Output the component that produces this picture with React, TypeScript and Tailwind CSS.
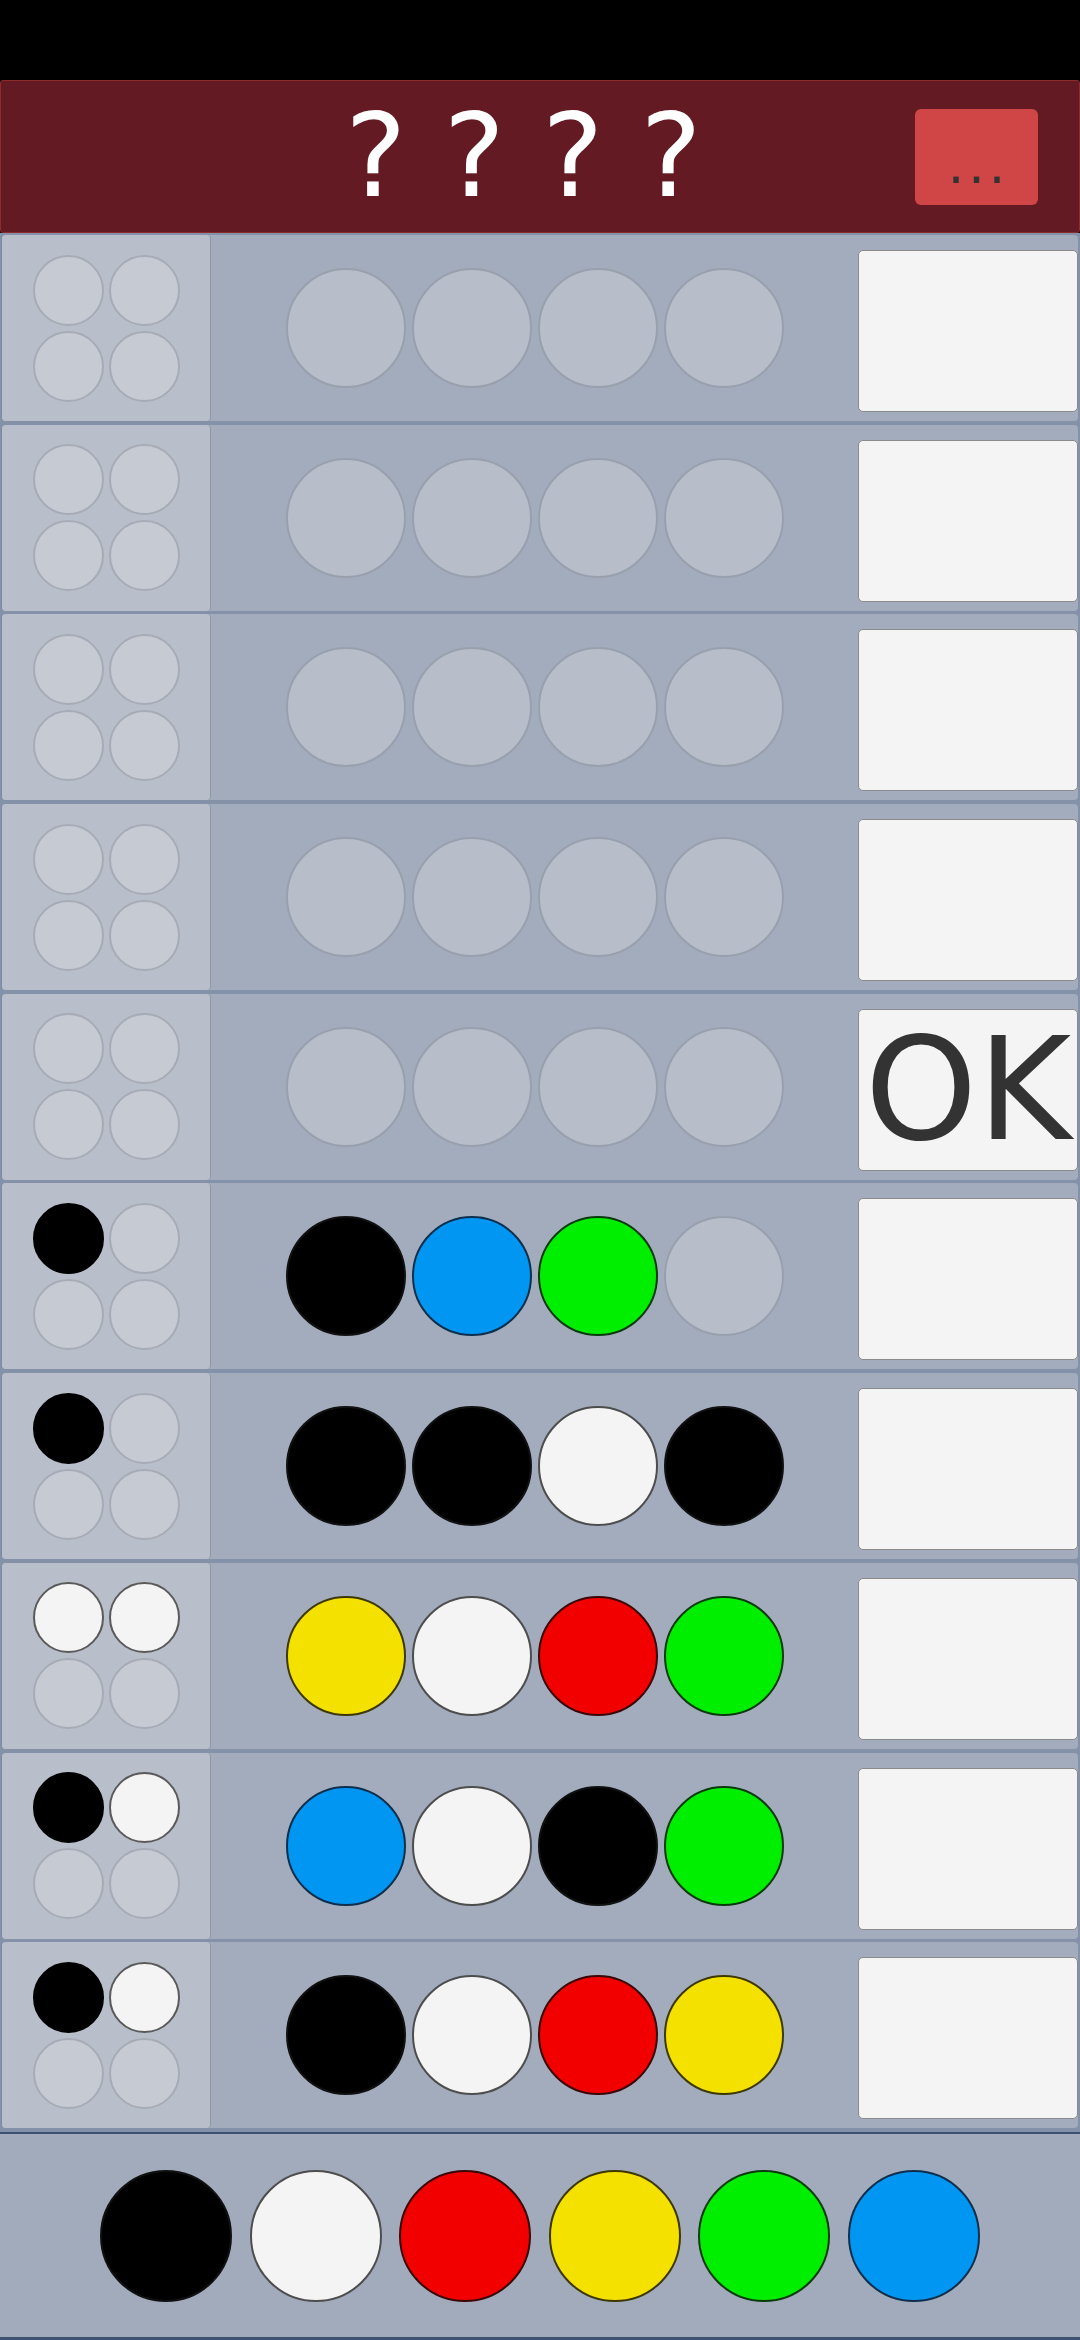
import React from 'react';

type Peg = 'empty' | 'black' | 'white' | 'red' | 'yellow' | 'green' | 'blue';
type Hint = 'empty' | 'black' | 'white';

interface Guess {
  pegs: Peg[];
  hints: Hint[];
  ok?: boolean;
}

const pegClass: Record<Peg, string> = {
  empty: 'bg-[#b7bdc9] border-[#99a0ad]',
  black: 'bg-black border-[#111]',
  white: 'bg-[#f4f4f4] border-[#4d4d4d]',
  red: 'bg-[#f20000] border-[#3a0606]',
  yellow: 'bg-[#f5e100] border-[#3d3800]',
  green: 'bg-[#00ee00] border-[#0a3a0a]',
  blue: 'bg-[#0096f2] border-[#0d2f4d]'
};

const hintClass: Record<Hint, string> = {
  empty: 'bg-[#c6cad3] border-[#a6abb6]',
  black: 'bg-black border-black',
  white: 'bg-[#f4f4f4] border-[#5a5a5a]'
};

const E: Peg = 'empty';

const guesses: Guess[] = [
  { pegs: [E, E, E, E], hints: ['empty', 'empty', 'empty', 'empty'] },
  { pegs: [E, E, E, E], hints: ['empty', 'empty', 'empty', 'empty'] },
  { pegs: [E, E, E, E], hints: ['empty', 'empty', 'empty', 'empty'] },
  { pegs: [E, E, E, E], hints: ['empty', 'empty', 'empty', 'empty'] },
  { pegs: [E, E, E, E], hints: ['empty', 'empty', 'empty', 'empty'], ok: true },
  { pegs: ['black', 'blue', 'green', E], hints: ['black', 'empty', 'empty', 'empty'] },
  { pegs: ['black', 'black', 'white', 'black'], hints: ['black', 'empty', 'empty', 'empty'] },
  { pegs: ['yellow', 'white', 'red', 'green'], hints: ['white', 'white', 'empty', 'empty'] },
  { pegs: ['blue', 'white', 'black', 'green'], hints: ['black', 'white', 'empty', 'empty'] },
  { pegs: ['black', 'white', 'red', 'yellow'], hints: ['black', 'white', 'empty', 'empty'] }
];

const palette: Peg[] = ['black', 'white', 'red', 'yellow', 'green', 'blue'];

const font = { fontFamily: '"DejaVu Sans", "Liberation Sans", sans-serif' };

function GuessRow({ guess }: { guess: Guess }) {
  return (
    <div className="flex h-[186px] rounded-[4px] bg-[#a3acbd] border-l border-[#7f8ba2]">
      {/* hint pegs */}
      <div className="w-[209px] shrink-0 rounded-[4px] bg-[#b9bfca] border-r border-[#8e97a7] flex items-center justify-center">
        <div className="grid grid-cols-2 gap-[5px]">
          {guess.hints.map((h, i) => (
            <div key={i} className={`w-[71px] h-[71px] rounded-full border-2 ${hintClass[h]}`} />
          ))}
        </div>
      </div>

      {/* code pegs */}
      <div className="flex-1 flex items-center justify-center gap-[6px]">
        {guess.pegs.map((p, i) => (
          <div key={i} className={`w-[120px] h-[120px] rounded-full border-[2.5px] ${pegClass[p]}`} />
        ))}
      </div>

      {/* check button */}
      <div
        className="w-[220px] h-[162px] shrink-0 mt-[15px] rounded-[5px] bg-[#f4f4f4] border border-[#8a8a8a] flex items-center justify-center overflow-visible"
        style={font}
      >
        {guess.ok && (
          <span className="text-[143px] leading-none text-[#333333] whitespace-nowrap">OK</span>
        )}
      </div>
    </div>
  );
}

export default function App() {
  return (
    <div className="w-[1080px] h-[2340px] bg-black flex flex-col overflow-hidden" style={font}>
      <div className="h-[80px] shrink-0 bg-black" />

      {/* secret code header */}
      <div className="h-[153px] shrink-0 bg-[#631a22] border border-[#8d2a2a] rounded-[3px] flex items-center pl-[131px] pr-[41px]">
        <div className="flex-1 text-center text-white text-[116px] leading-none whitespace-pre pb-[2px]">? ? ? ?</div>
        <button className="w-[123px] h-[96px] rounded-[6px] bg-[#d04545] flex items-end justify-center pb-[14px]">
          <span className="text-[52px] leading-none text-[#333333] tracking-[4px] pl-[4px]">...</span>
        </button>
      </div>

      {/* guesses */}
      <div className="bg-[#8391a9] pt-[2px] pb-[4px] pl-[1px] pr-[2px] flex flex-col gap-[3.7px]">
        {guesses.map((g, i) => (
          <GuessRow key={i} guess={g} />
        ))}
      </div>

      {/* colour picker */}
      <div className="flex-1 bg-[#a2abbb] border-t-[2.5px] border-b-[3px] border-[#3e5272] flex items-center justify-center gap-[17.5px]">
        {palette.map(p => (
          <div key={p} className={`w-[132px] h-[132px] rounded-full border-[2.5px] ${pegClass[p]}`} />
        ))}
      </div>
    </div>
  );
}
